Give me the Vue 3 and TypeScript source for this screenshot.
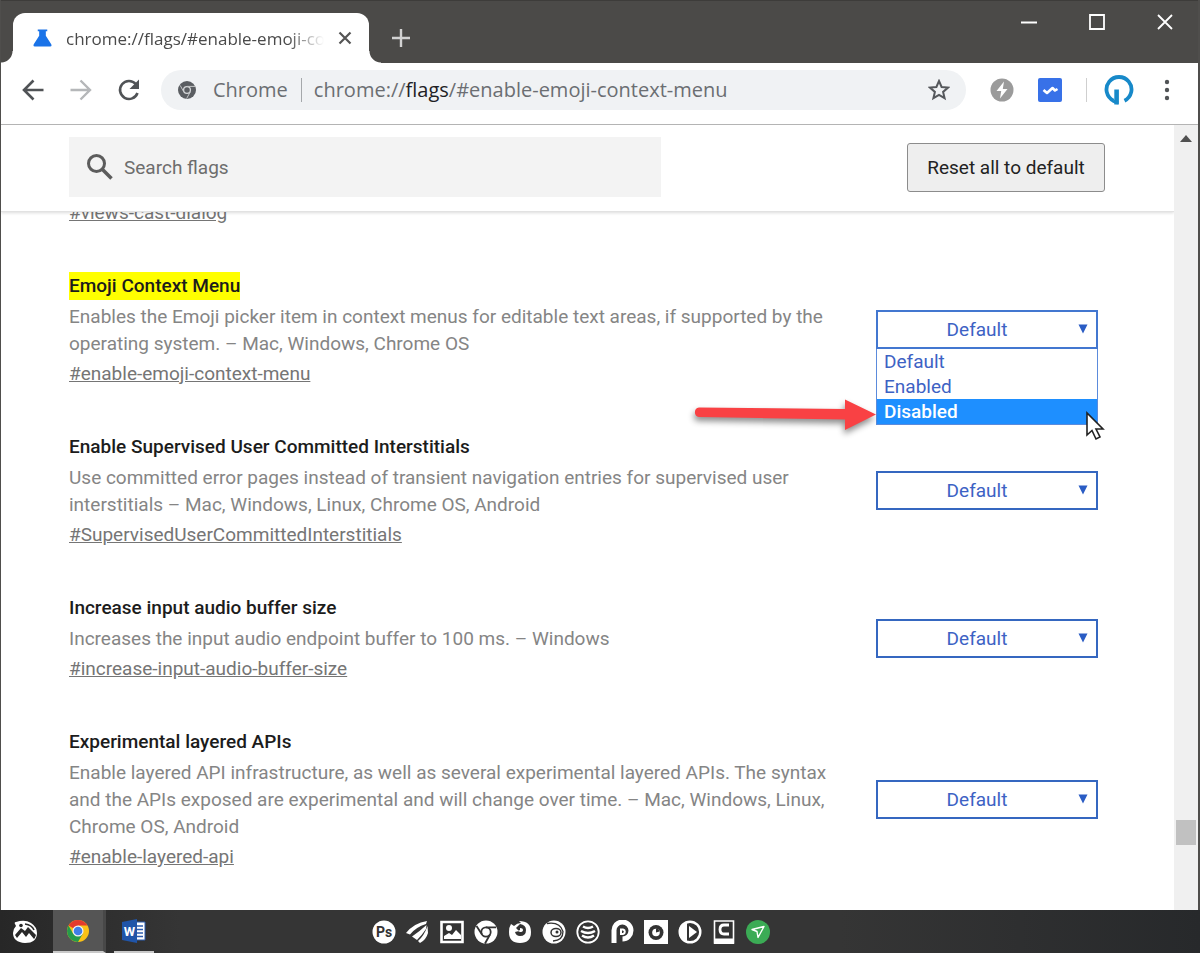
<script setup lang="ts">
import { ref } from 'vue'

interface Flag {
  id: string
  title: string
  description: string
  highlighted?: boolean
  open?: boolean
}

const options = ['Default', 'Enabled', 'Disabled']

const flags = ref<Flag[]>([
  {
    id: 'enable-emoji-context-menu',
    title: 'Emoji Context Menu',
    description:
      'Enables the Emoji picker item in context menus for editable text areas, if supported by the operating system. – Mac, Windows, Chrome OS',
    highlighted: true,
    open: true,
  },
  {
    id: 'SupervisedUserCommittedInterstitials',
    title: 'Enable Supervised User Committed Interstitials',
    description:
      'Use committed error pages instead of transient navigation entries for supervised user interstitials – Mac, Windows, Linux, Chrome OS, Android',
  },
  {
    id: 'increase-input-audio-buffer-size',
    title: 'Increase input audio buffer size',
    description: 'Increases the input audio endpoint buffer to 100 ms. – Windows',
  },
  {
    id: 'enable-layered-api',
    title: 'Experimental layered APIs',
    description:
      'Enable layered API infrastructure, as well as several experimental layered APIs. The syntax and the APIs exposed are experimental and will change over time. – Mac, Windows, Linux, Chrome OS, Android',
  },
])
</script>

<template>
  <div class="desktop">
    <div class="window">
      <header class="titlebar">
        <div class="tab">
          <svg class="flask" viewBox="0 0 20 20" aria-hidden="true">
            <path d="M5 1h10v2h-1.500v4.500l5.700 9q1 2.500-1.200 2.500H2q-2.200 0-1.200-2.500L6.500 7.500V3H5z" fill="#1a73e8" />
          </svg>
          <span class="tab-title">chrome://flags/#enable-emoji-context-menu</span>
          <button class="plain" aria-label="Close tab">
            <svg width="14" height="14" viewBox="0 0 14 14"><path d="M1.500 1.500l11 11M12.500 1.500l-11 11" stroke="#555" stroke-width="2.200" /></svg>
          </button>
        </div>
        <button class="plain new-tab" aria-label="New tab">
          <svg width="20" height="20" viewBox="0 0 20 20"><path d="M10 1v18M1 10h18" stroke="#d2d2d2" stroke-width="2.400" /></svg>
        </button>
        <div class="controls">
          <button class="plain" aria-label="Minimize">
            <svg width="18" height="18" viewBox="0 0 18 18"><path d="M1 9.500h16" stroke="#fff" stroke-width="2" /></svg>
          </button>
          <button class="plain" aria-label="Maximize">
            <svg width="18" height="18" viewBox="0 0 18 18"><path d="M2 2h14v14H2z" fill="none" stroke="#fff" stroke-width="1.800" /></svg>
          </button>
          <button class="plain" aria-label="Close">
            <svg width="18" height="18" viewBox="0 0 18 18"><path d="M2 2l14 14M16 2L2 16" stroke="#fff" stroke-width="1.800" /></svg>
          </button>
        </div>
      </header>

      <nav class="toolbar">
        <div class="nav-buttons">
          <button class="plain" aria-label="Back">
            <svg width="24" height="24" viewBox="0 0 24 24"><path d="M22.500 12H3M12.500 2.500L3 12l9.500 9.500" fill="none" stroke="#505356" stroke-width="2.600" /></svg>
          </button>
          <button class="plain" aria-label="Forward">
            <svg width="24" height="24" viewBox="0 0 24 24"><path d="M1.500 12H21M11.500 2.500L21 12l-9.500 9.500" fill="none" stroke="#b5b7b9" stroke-width="2.400" /></svg>
          </button>
          <button class="plain" aria-label="Reload">
            <svg width="24" height="24" viewBox="0 0 24 24">
              <path d="M20.500 15A9 9 0 1 1 18.800 6" fill="none" stroke="#505356" stroke-width="2.600" />
              <path d="M22 1.500v9.500h-9.500z" fill="#505356" />
            </svg>
          </button>
        </div>
        <div class="omnibox">
          <svg width="20" height="20" viewBox="0 0 20 20" aria-hidden="true">
            <circle cx="10" cy="10" r="9" fill="#5b5e62" />
            <circle cx="10" cy="10" r="3.400" fill="#5b5e62" stroke="#d5d7d9" stroke-width="1.300" />
            <path d="M10 6.400h8M6.800 12L3.200 5.400M13.200 12l-3.600 6.600" stroke="#c5c7c9" stroke-width="1" />
          </svg>
          <span class="site">Chrome</span>
          <span class="rule"></span>
          <span class="url">chrome://<b>flags</b>/#enable-emoji-context-menu</span>
          <button class="plain" aria-label="Bookmark this page">
            <svg width="22" height="22" viewBox="0 0 22 22"><path d="M11 2l2.600 6 6.400.6-4.900 4.300 1.500 6.300L11 15.900l-5.600 3.300 1.500-6.300L2 8.600 8.400 8z" fill="none" stroke="#55585c" stroke-width="2" /></svg>
          </button>
        </div>
        <div class="extensions">
          <button class="plain" aria-label="Lightning extension">
            <svg width="24" height="24" viewBox="0 0 24 24"><circle cx="12" cy="12" r="11.500" fill="#9b9b9b" /><path d="M14 3.500L6.500 13h4.700L10 20.500 17.500 11h-4.700z" fill="#fff" /></svg>
          </button>
          <button class="plain" aria-label="Tasks extension">
            <svg width="24" height="24" viewBox="0 0 24 24"><rect width="24" height="24" rx="2" fill="#3871e8" /><path d="M5.500 12l3.500 3 5.500-5 2.500 2.500 2.500-1.500" fill="none" stroke="#fff" stroke-width="2.600" stroke-linejoin="round" /></svg>
          </button>
          <span class="divider"></span>
          <button class="plain" aria-label="Profile">
            <svg width="30" height="30" viewBox="0 0 30 30"><path d="M9.500 25.700A12.500 12.500 0 1 1 20.500 25.700" fill="none" stroke="#1789c9" stroke-width="3.800" /><path d="M12.600 14.500v15" stroke="#1789c9" stroke-width="4.600" /><path d="M9 26l5 2" stroke="#1789c9" stroke-width="3" /></svg>
          </button>
          <button class="plain menu-dots" aria-label="Menu">
            <svg width="6" height="22" viewBox="0 0 6 22" fill="#505356"><circle cx="3" cy="3" r="2.200" /><circle cx="3" cy="11" r="2.200" /><circle cx="3" cy="19" r="2.200" /></svg>
          </button>
        </div>
      </nav>

      <div class="viewport">
        <main class="page">
          <div class="page-head">
            <label class="search">
              <svg width="28" height="28" viewBox="0 0 28 28" aria-hidden="true"><circle cx="10.500" cy="10.500" r="8" fill="none" stroke="#5c5c5c" stroke-width="3" /><path d="M16.500 16.500l9 9" stroke="#5c5c5c" stroke-width="3.600" /></svg>
              <input type="text" placeholder="Search flags" aria-label="Search flags" />
            </label>
            <button class="reset">Reset all to default</button>
          </div>

          <div class="flags">
            <a class="flag-link" href="#views-cast-dialog">#views-cast-dialog</a>
            <section v-for="flag in flags" :key="flag.id" class="flag">
              <div class="flag-text">
                <h2><span :class="{ mark: flag.highlighted }">{{ flag.title }}</span></h2>
                <p>{{ flag.description }}</p>
                <a class="flag-link" :href="'#' + flag.id">#{{ flag.id }}</a>
              </div>
              <div class="picker" :class="{ open: flag.open }">
                <select :aria-label="flag.title">
                  <option v-for="option in options" :key="option">{{ option }}</option>
                </select>
                <svg class="caret" viewBox="0 0 10 10" aria-hidden="true"><path d="M0.500 0.500h9L5 9.500z" fill="#2a5cc4" /></svg>
                <template v-if="flag.open">
                  <ul class="menu" role="listbox">
                    <li v-for="option in options" :key="option" role="option" :class="{ active: option === 'Disabled' }">{{ option }}</li>
                  </ul>
                  <svg class="pointer-arrow" viewBox="0 0 190 44" aria-hidden="true">
                    <path d="M9 12.500L155 14V4.500L186 19.500 155 35V24.500L9 22a4.800 4.800 0 0 1 0-9.500z" fill="#f94144" />
                  </svg>
                  <svg class="cursor" viewBox="0 0 20 30" aria-hidden="true">
                    <path d="M2 2v22l5-4.500 4 8.500 4-2-4-8h7z" fill="#fff" stroke="#222" stroke-width="1.600" />
                  </svg>
                </template>
              </div>
            </section>
          </div>
        </main>
        <div class="scrollbar" aria-hidden="true">
          <svg width="12" height="7" viewBox="0 0 12 7"><path d="M6 0l6 7H0z" fill="#505050" /></svg>
          <span class="thumb"></span>
        </div>
      </div>
    </div>

    <footer class="taskbar">
      <button class="app start" aria-label="Start">
        <svg width="26" height="24" viewBox="0 0 26 24">
          <path d="M3 4Q2 2 4 2q9-3 15 1 6 4 6 10 0 10-12 10Q1 22 1 13q0-4 3-7z" fill="#fff" />
          <path d="M3 15L9 8l4 3 3-4 8 8q-1 3-2 4l-5-6-3 4-4-5-5 6z" fill="#292929" />
          <circle cx="9" cy="5.500" r="1.800" fill="#292929" />
          <path d="M13 4q7 1 9 6" fill="none" stroke="#292929" stroke-width="1.500" />
        </svg>
      </button>
      <button class="app current" aria-label="Chrome">
        <svg width="24" height="24" viewBox="0 0 24 24">
          <circle cx="12" cy="12" r="11" fill="#fbc116" />
          <path d="M12 12L2.500 6.500A11 11 0 0 1 21.500 6.500H12z" fill="#e33b2e" />
          <path d="M2.500 6.500A11 11 0 0 0 12 23l4.800-8.300H7.200z" fill="#259b4b" />
          <circle cx="12" cy="12" r="5.500" fill="#f3f3f3" /><circle cx="12" cy="12" r="4.300" fill="#3f7ee8" />
        </svg>
      </button>
      <button class="app running" aria-label="Word">
        <svg width="24" height="24" viewBox="0 0 24 24">
          <path d="M11 3h12v18H11z" fill="#fff" stroke="#2b5cb0" />
          <path d="M14 7h7M14 10.500h7M14 14h7M14 17.500h7" stroke="#2b5cb0" stroke-width="1.500" />
          <path d="M0 3L15 0v24L0 21z" fill="#2055a8" />
          <text x="7.500" y="17" class="glyph" font-size="13" text-anchor="middle" fill="#fff">W</text>
        </svg>
      </button>
      <div class="tray">
        <svg viewBox="0 0 24 24"><circle cx="12" cy="12" r="11.500" fill="#fff" /><text x="12" y="16.500" class="glyph" font-size="14" text-anchor="middle" fill="#333">Ps</text></svg>
        <svg viewBox="0 0 24 24" fill="#fff"><path d="M0 13Q8 3 21 1l-1 3Q10 7 4 14.500z" /><path d="M6 16.500Q14 11 20.500 5L20 9Q16 15 11 20z" /><path d="M21.500 6l.5 7q-2 7-8 10l-2-2q6-5 9.500-15z" /></svg>
        <svg viewBox="0 0 24 24"><path d="M1.500 2h21v20h-21z" fill="#333" stroke="#fff" stroke-width="2.600" /><path d="M4 16l5-3 3 2 4-5 5 5v4H4z" fill="#fff" /><circle cx="9" cy="8" r="3" fill="#fff" /></svg>
        <svg viewBox="0 0 24 24"><circle cx="12" cy="12" r="11.500" fill="#fff" /><circle cx="12" cy="12" r="4.700" fill="#fff" stroke="#333" stroke-width="1.800" /><path d="M12 7.300h10M8 14.500L2.500 6M16 14.500l-5 9" stroke="#333" stroke-width="1.800" /></svg>
        <svg viewBox="0 0 24 24"><path d="M3 4l3 2q3-3 7-3l-2-2q12 0 12 11 0 11-11 11T1 12q0-5 2-8z" fill="#fff" /><path d="M12 4q6 1 6 6 0 6-6 6-4 0-5-4l4-1-3-3z" fill="#333" /><path d="M12 8q3 0 3 2t-3 2l-2-1 2-1z" fill="#fff" /></svg>
        <svg viewBox="0 0 24 24"><circle cx="12" cy="12" r="11.500" fill="#fff" /><path d="M5 3.500q13-2 16 8 0 9-10 9.500" fill="none" stroke="#333" stroke-width="1.300" /><ellipse cx="14" cy="12.500" rx="5" ry="4" fill="#fff" stroke="#333" stroke-width="1.500" /><circle cx="15" cy="12" r="1.500" fill="#333" /></svg>
        <svg viewBox="0 0 24 24" fill="none" stroke="#fff"><circle cx="12" cy="12" r="10.700" stroke-width="1.800" /><path d="M7 6.500q5 3 10 0M5 11q7 4 14 0M6 15.500q6 4 12 0" stroke-width="2.400" /></svg>
        <svg viewBox="0 0 24 24"><path d="M4 23V11a8.500 8.500 0 1 1 8.500 8" fill="none" stroke="#fff" stroke-width="5" /><path d="M11 14V9.500h2a2.300 2.300 0 0 1 0 4.500z" fill="#333" stroke="#fff" stroke-width="2" /></svg>
        <svg viewBox="0 0 24 24"><path d="M0 0h24v24H0z" fill="#fff" /><circle cx="12" cy="12.500" r="7.500" fill="#333" /><circle cx="12" cy="12.500" r="3.800" fill="#fff" /><path d="M12 12.500V8.500q3 0 3.500 3z" fill="#333" /></svg>
        <svg viewBox="0 0 24 24"><circle cx="12" cy="12" r="10.300" fill="#333" stroke="#fff" stroke-width="2.400" /><path d="M9 2v20Q1 20 1 12T9 2z" fill="#fff" /><path d="M11 6l8 6-8 6z" fill="#fff" /></svg>
        <svg viewBox="0 0 24 24"><path d="M2.500 1h19v22h-19z" fill="#333" stroke="#fff" stroke-width="1.600" /><path d="M2 18.500h20V24H2z" fill="#fff" /><path d="M17 5h-5q-4 0-4 4.500T12 14h5" fill="none" stroke="#fff" stroke-width="2.800" /></svg>
        <svg viewBox="0 0 24 24"><circle cx="12" cy="12" r="12" fill="#3bab55" /><path d="M6 9.500l12-3-6 11-1-6z" fill="none" stroke="#fff" stroke-width="1.400" stroke-linejoin="round" /></svg>
      </div>
    </footer>
  </div>
</template>

<style>
body {
  margin: 0;
}
</style>

<style scoped>
* {
  box-sizing: border-box;
}
.desktop {
  display: flex;
  flex-direction: column;
  height: 100vh;
  overflow: hidden;
  font-family: Roboto, "Liberation Sans", sans-serif;
}
.window {
  flex: 1;
  min-height: 0;
  display: flex;
  flex-direction: column;
  border: solid #4f4e4c;
  border-width: 0 2px 0 1px;
  background: #fff;
}
.plain {
  display: inline-flex;
  flex: none;
  padding: 0;
  border: 0;
  background: none;
}
.titlebar {
  flex: none;
  display: flex;
  height: 63px;
  padding-left: 12px;
  background: #4b4a48;
  border-top: 1px solid #3d3c3a;
  font-family: "Open Sans", "Noto Sans", sans-serif;
}
.tab {
  position: relative;
  display: flex;
  align-items: center;
  width: 356px;
  margin-top: 12px;
  padding: 0 17px 0 20px;
  border-radius: 12px 12px 0 0;
  background: #fff;
}
.tab::before,
.tab::after {
  content: "";
  position: absolute;
  bottom: 0;
  width: 12px;
  height: 12px;
}
.tab::before {
  right: 100%;
  background: radial-gradient(circle at 0 0, #4b4a48 11px, #fff 12px);
}
.tab::after {
  left: 100%;
  background: radial-gradient(circle at 100% 0, #4b4a48 11px, #fff 12px);
}
.flask {
  flex: none;
  width: 19px;
  height: 20px;
}
.tab-title {
  flex: 1;
  margin: 0 14px;
  overflow: hidden;
  white-space: nowrap;
  font-size: 17px;
  color: #4a4a4a;
  mask-image: linear-gradient(90deg, #000 86%, transparent);
}
.new-tab {
  align-self: center;
  margin: 12px 0 0 22px;
}
.controls {
  display: flex;
  gap: 50px;
  margin: 12px 24px 0 auto;
  height: 18px;
}
.toolbar {
  flex: none;
  display: flex;
  align-items: center;
  height: 62px;
  padding: 0 28px 8px 20px;
  border-bottom: 1px solid #b4b4b4;
  font-family: "Open Sans", "Noto Sans", sans-serif;
}
.nav-buttons {
  display: flex;
  gap: 24px;
}
.omnibox {
  flex: 1;
  display: flex;
  align-items: center;
  height: 40px;
  margin: 0 24px 0 20px;
  padding: 0 16px;
  border-radius: 20px;
  background: #f0f2f4;
  font-size: 20px;
  color: #6b6e72;
}
.site {
  margin-left: 16px;
}
.rule {
  width: 1px;
  height: 24px;
  margin: 0 12px 0 13px;
  background: #a5a8ab;
}
.url {
  flex: 1;
}
.url b {
  font-weight: 400;
  color: #202124;
}
.extensions {
  display: flex;
  align-items: center;
  gap: 24px;
}
.divider {
  width: 1px;
  height: 24px;
  margin-right: -7px;
  background: #cfcfcf;
}
.menu-dots {
  margin-left: 6px;
}
.viewport {
  flex: 1;
  display: flex;
  min-height: 0;
}
.page {
  flex: 1;
  overflow: hidden;
}
.page-head {
  position: relative;
  z-index: 1;
  display: flex;
  align-items: center;
  justify-content: space-between;
  height: 87px;
  padding: 0 69px 2px 68px;
  border-bottom: 1px solid #e2e2e2;
  background: #fff;
  box-shadow: 0 1px 3px rgba(0, 0, 0, 0.14);
}
.search {
  display: flex;
  align-items: center;
  width: 592px;
  height: 60px;
  padding-left: 17px;
  background: #f3f3f3;
}
.search input {
  flex: 1;
  margin-left: 10px;
  padding: 0;
  border: 0;
  outline: 0;
  background: none;
  font: 19px Roboto, sans-serif;
}
.search input::placeholder {
  color: #6d6d6d;
}
.reset {
  width: 198px;
  height: 49px;
  padding: 0;
  border: 1px solid #8c8c8c;
  border-radius: 3px;
  background: #eee;
  font: 19px Roboto, sans-serif;
  color: #222;
}
.flags {
  display: flex;
  flex-direction: column;
  align-items: stretch;
  gap: 46px;
  margin-top: -13px;
  padding: 0 76px 0 68px;
}
.flags > .flag-link {
  align-self: flex-start;
}
.flag {
  display: grid;
  grid-template-columns: minmax(0, 1fr) 222px;
  gap: 30px;
  align-items: center;
}
.flag-text {
  display: flex;
  flex-direction: column;
  align-items: flex-start;
  gap: 3px;
}
h2,
p {
  margin: 0;
}
h2 {
  font-size: 19px;
  line-height: 28px;
  font-weight: 500;
  color: #1c1c1c;
}
.mark {
  display: block;
  background: #ff0;
}
p,
.flag-link {
  font-size: 19px;
  line-height: 27px;
  font-weight: 400;
  color: #858585;
}
.flag-link {
  text-decoration: underline;
  color: #757575;
}
.picker {
  position: relative;
  height: 39px;
}
select {
  width: 100%;
  height: 100%;
  padding: 0 20px 0 0;
  border: 2px solid #3567c0;
  border-radius: 0;
  background: #fff;
  appearance: none;
  text-align: center;
  text-align-last: center;
  font: 19px Roboto, sans-serif;
  color: #3d62c4;
}
.open select {
  border-color: #4377d0;
}
.caret {
  position: absolute;
  right: 10px;
  top: 14px;
  width: 10px;
  height: 10px;
}
.menu {
  position: absolute;
  z-index: 1;
  top: 100%;
  left: 0;
  right: 0;
  margin: 0;
  padding: 0;
  border: 1px solid #5b8bdc;
  border-top: 0;
  background: #fff;
  list-style: none;
  font-size: 19px;
  line-height: 25px;
  color: #3d62c4;
}
.menu li {
  padding-left: 7px;
}
.menu .active {
  background: #1e8fff;
  font-weight: 500;
  color: #fff;
}
.pointer-arrow {
  position: absolute;
  z-index: 2;
  top: 85px;
  right: 218px;
  width: 190px;
  height: 44px;
  filter: drop-shadow(-1px 4px 3px rgba(0, 0, 0, 0.45));
}
.cursor {
  position: absolute;
  z-index: 2;
  top: 101px;
  right: -7px;
  width: 20px;
  height: 30px;
}
.scrollbar {
  flex: none;
  display: flex;
  flex-direction: column;
  align-items: center;
  justify-content: space-between;
  width: 24px;
  padding: 10px 0 65px;
  background: #f0f0f0;
}
.thumb {
  width: 20px;
  height: 25px;
  background: #c1c1c1;
}
.taskbar {
  flex: none;
  display: flex;
  align-items: center;
  height: 43px;
  background: linear-gradient(90deg, #272727, #353535 15%, #353535 70%, #27292b);
}
.app {
  display: flex;
  align-items: center;
  justify-content: center;
  width: 53px;
  height: 43px;
  padding: 0;
  border: 0;
  background: none;
}
.start {
  padding-right: 4px;
}
.current {
  background: #555;
  border-bottom: 2px solid #c9c9c9;
  border-right: 3px solid #484848;
}
.running {
  width: 40px;
  margin-left: 8px;
  border-bottom: 2px solid #c9c9c9;
}
.tray {
  display: flex;
  gap: 10px;
  margin-left: 218px;
}
.tray svg {
  width: 24px;
  height: 24px;
}
.glyph {
  font-family: Roboto, sans-serif;
  font-weight: 700;
}
</style>
